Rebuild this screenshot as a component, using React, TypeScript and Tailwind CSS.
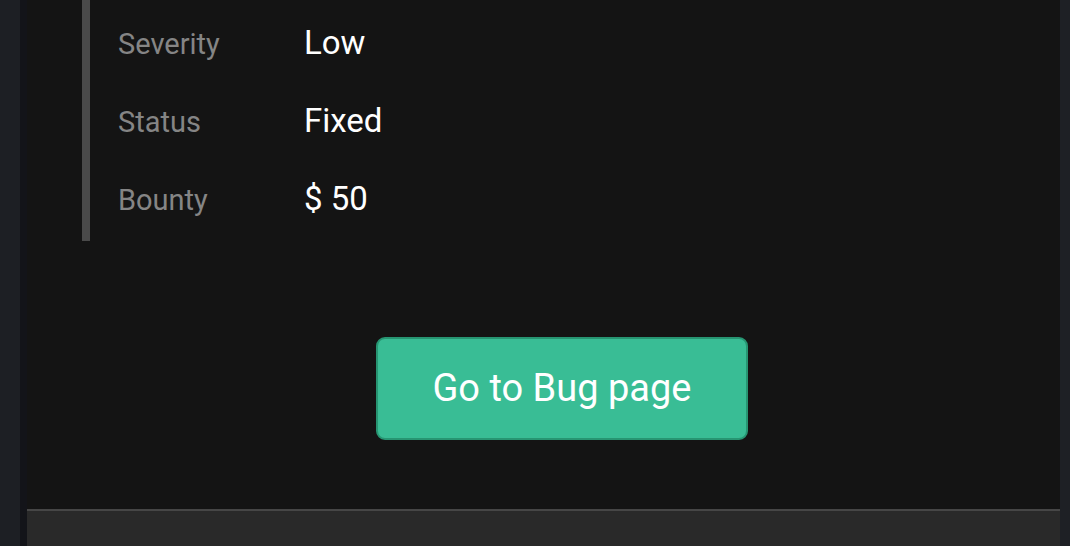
import React from 'react';

const rows = [
  { label: 'Severity', value: 'Low' },
  { label: 'Status', value: 'Fixed' },
  { label: 'Bounty', value: '$ 50' },
];

export default function App() {
  return (
    <div className="flex h-[546px] w-[1070px] overflow-hidden bg-[#141414] font-['Roboto',sans-serif]">
      <div className="w-[20px] shrink-0 bg-[#1d1f24]" />
      <div className="w-[7px] shrink-0 bg-[#131419]" />

      <main className="flex flex-1 flex-col bg-[#141414]">
        <section className="flex h-[509px] shrink-0 flex-col pl-[55px] pr-[18px]">
          {/* Bug details */}
          <div className="w-fit border-l-[8px] border-[#4a4a4a] pb-[3px] pl-[28px] pt-[4px]">
            {rows.map((row) => (
              <div key={row.label} className="flex h-[78px] items-center">
                <div className="flex items-baseline">
                  <span className="w-[186px] text-[29px] leading-[40px] text-[#858585]">{row.label}</span>
                  <span className="text-[33px] leading-[40px] text-white">{row.value}</span>
                </div>
              </div>
            ))}
          </div>

          <div className="mt-[96px] flex justify-center">
            <button className="flex h-[103px] w-[372px] items-center justify-center rounded-[9px] border-2 border-[#279572] bg-[#39bd95] text-[38px] text-white">
              Go to Bug page
            </button>
          </div>
        </section>

        <footer className="flex-1 border-t-2 border-[#464646] bg-[#292929]" />
      </main>

      <div className="w-[10px] shrink-0 bg-[#1e2025]" />
    </div>
  );
}
